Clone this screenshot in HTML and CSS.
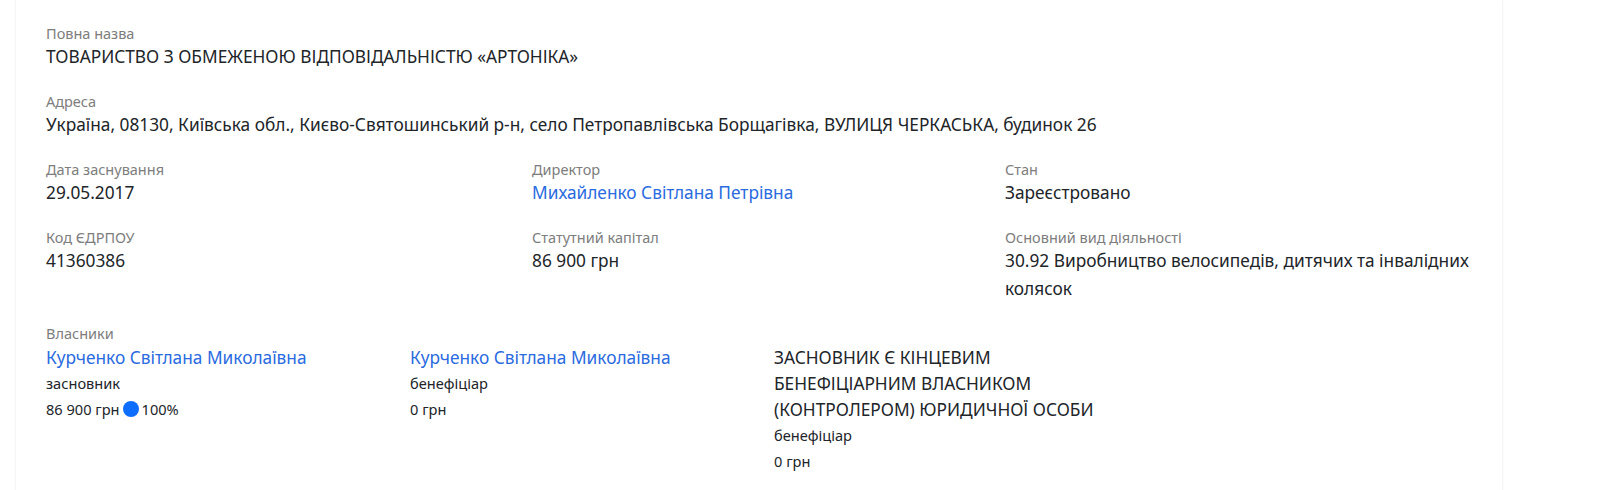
FILE: index.html
```html
<!DOCTYPE html>
<html lang="uk">
<head>
<meta charset="utf-8">
<title>АРТОНІКА</title>
<link rel="stylesheet" href="styles.css">
</head>
<body>
<div class="card">
  <div class="field">
    <div class="label">Повна назва</div>
    <div class="value">ТОВАРИСТВО З ОБМЕЖЕНОЮ ВІДПОВІДАЛЬНІСТЮ «АРТОНІКА»</div>
  </div>
  <div class="field">
    <div class="label">Адреса</div>
    <div class="value">Україна, 08130, Київська обл., Києво-Святошинський р-н, село Петропавлівська Борщагівка, ВУЛИЦЯ ЧЕРКАСЬКА, будинок 26</div>
  </div>
  <div class="grid">
    <div class="field">
      <div class="label">Дата заснування</div>
      <div class="value">29.05.2017</div>
    </div>
    <div class="field">
      <div class="label">Директор</div>
      <div class="value"><a class="link" href="#">Михайленко Світлана Петрівна</a></div>
    </div>
    <div class="field">
      <div class="label">Стан</div>
      <div class="value">Зареєстровано</div>
    </div>
    <div class="field">
      <div class="label">Код ЄДРПОУ</div>
      <div class="value">41360386</div>
    </div>
    <div class="field">
      <div class="label">Статутний капітал</div>
      <div class="value">86 900 грн</div>
    </div>
    <div class="field">
      <div class="label">Основний вид діяльності</div>
      <div class="value">30.92 Виробництво велосипедів, дитячих та інвалідних колясок</div>
    </div>
  </div>
  <div class="field">
    <div class="label">Власники</div>
    <div class="owners">
      <div class="owner">
        <div class="owner-name"><a class="link" href="#">Курченко Світлана Миколаївна</a></div>
        <div class="owner-role">засновник</div>
        <div class="owner-sum">86 900 грн <span class="dot"></span> 100%</div>
      </div>
      <div class="owner">
        <div class="owner-name"><a class="link" href="#">Курченко Світлана Миколаївна</a></div>
        <div class="owner-role">бенефіціар</div>
        <div class="owner-sum">0 грн</div>
      </div>
      <div class="owner">
        <div class="owner-name">ЗАСНОВНИК Є КІНЦЕВИМ БЕНЕФІЦІАРНИМ ВЛАСНИКОМ (КОНТРОЛЕРОМ) ЮРИДИЧНОЇ ОСОБИ</div>
        <div class="owner-role">бенефіціар</div>
        <div class="owner-sum">0 грн</div>
      </div>
    </div>
  </div>
</div>
</body>
</html>
```
FILE: styles.css
```css
html, body {
  margin: 0;
  padding: 0;
  background: #ffffff;
}
body {
  font-family: "Noto Sans", "Open Sans", sans-serif;
  color: #212529;
  height: 490px;
  overflow: hidden;
}
.card {
  margin-left: 16px;
  width: 1426px;
  min-height: 490px;
  box-sizing: content-box;
  padding: 23px 30px 0 30px;
  background: #fff;
  box-shadow: -1px 0 2px rgba(0,0,0,0.05), 1px 0 2px rgba(0,0,0,0.05);
}
.field {
  margin-bottom: 20px;
}
.label {
  font-size: 14.5px;
  line-height: 20px;
  color: #7d7d7d;
}
.value {
  font-size: 17.3px;
  line-height: 28px;
}
.link {
  color: #2a6be0;
  text-decoration: none;
}
.grid {
  display: grid;
  grid-template-columns: 486px 473px 1fr;
}
.owners {
  display: flex;
  gap: 18px;
  margin-top: 2px;
}
.owner {
  width: 346px;
}
.owner-name {
  font-size: 17.3px;
  line-height: 26px;
}
.owner-role, .owner-sum {
  font-size: 14.6px;
  line-height: 25.5px;
}
.owner-sum {
  display: flex;
  align-items: center;
  gap: 3px;
}
.dot {
  display: inline-block;
  width: 16px;
  height: 16px;
  border-radius: 50%;
  background: #0d6efd;
}
```
